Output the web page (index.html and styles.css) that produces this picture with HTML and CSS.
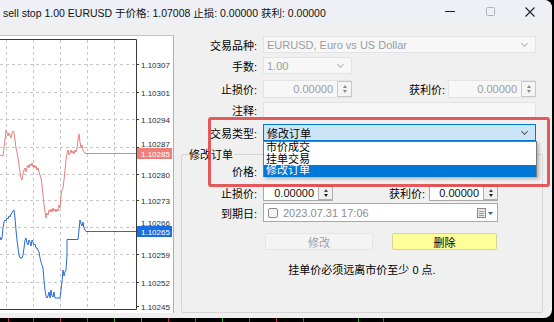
FILE: index.html
```html
<!DOCTYPE html>
<html lang="zh">
<head>
    <meta charset="UTF-8">
    <title>sell stop 1.00 EURUSD</title>
    <link rel="stylesheet" href="styles.css">
</head>
<body>
    <div class="window">
        <div class="titlebar">
            <span class="title">sell stop 1.00 EURUSD 于价格: 1.07008 止损: 0.00000 获利: 0.00000</span>
            <div class="controls">
                <svg class="ctl" width="40" height="24" viewBox="0 0 40 24"><line x1="15" y1="11.5" x2="25" y2="11.5" stroke="#222" stroke-width="1"/></svg>
                <svg class="ctl" width="40" height="24" viewBox="0 0 40 24"><rect x="16.5" y="7.5" width="8" height="8" rx="1" fill="none" stroke="#b4b4b4"/></svg>
                <svg class="ctl" width="40" height="24" viewBox="0 0 40 24"><path d="M15.5 7.5 L24.5 16.5 M24.5 7.5 L15.5 16.5" stroke="#222" stroke-width="1.1"/></svg>
            </div>
        </div>
        <div class="content">
            <div class="chart">
                <svg width="173" height="277" viewBox="0 36 173 277">
                    <!-- сетка -->
                    <g stroke="#c8c8c8" stroke-dasharray="3,3">
                        <line x1="6.5" y1="40" x2="6.5" y2="309"/>
                        <line x1="33.5" y1="40" x2="33.5" y2="309"/>
                        <line x1="60.5" y1="40" x2="60.5" y2="309"/>
                        <line x1="87.5" y1="40" x2="87.5" y2="309"/>
                        <line x1="114.5" y1="40" x2="114.5" y2="309"/>
                        <line x1="0" y1="64.5" x2="136" y2="64.5"/>
                        <line x1="0" y1="92.5" x2="136" y2="92.5"/>
                        <line x1="0" y1="119.5" x2="136" y2="119.5"/>
                        <line x1="0" y1="147.5" x2="136" y2="147.5"/>
                        <line x1="0" y1="174.5" x2="136" y2="174.5"/>
                        <line x1="0" y1="200.5" x2="136" y2="200.5"/>
                        <line x1="0" y1="227.5" x2="136" y2="227.5"/>
                        <line x1="0" y1="254.5" x2="136" y2="254.5"/>
                        <line x1="0" y1="282.5" x2="136" y2="282.5"/>
                    </g>
                    <polyline fill="none" stroke="#e8807c" stroke-width="1" points="0,155 3,156 4,148 5,140 6,130 7,133 8,136 9,133 10,135 11,138 12,133 13,131 14,133 15,140 16,148 17,152 18,158 19,165 20,172 21,178 22,180 23,174 24,170 25,168 26,172 27,167 28,165 29,168 30,164 31,166 32,163 33,167 34,165 35,168 36,166 37,170 38,168 39,172 40,175 41,178 42,185 43,195 44,205 45,212 46,218 47,213 48,215 49,210 50,212 51,209 52,212 53,208 54,211 55,209 56,212 57,209 58,211 59,205 60,208 61,195 62,190 63,188 64,180 65,170 66,160 67,154 68,150 69,155 70,153 71,150 72,153 73,151 74,154 75,150 76,152 77,148 78,140 79,134 80,142 81,148 82,145 83,150 84,152 85,153.5 136,153.5"/>
                    <polyline fill="none" stroke="#2a6ad8" stroke-width="1" points="0,237 1,240 2,238 3,228 4,222 5,220 6,221 7,218 8,219 9,216 10,217 11,214 12,213 13,211 14,210 15,218 16,230 17,240 18,248 19,255 20,258 22,258 23,255 24,248 25,240 26,238 27,243 28,245 29,240 30,242 31,246 32,240 33,242 34,245 35,244 36,248 37,248 38,250 39,252 40,258 41,262 42,265 43,268 44,280 45,290 46,296 47,298 48,296 49,292 50,298 51,290 52,296 53,297 54,292 55,298 60,298 61,290 62,282 63,270 64,276 65,272 66,270 67,255 67,239.5 78,239.5 79,230 80,220 81,224 82,226 83,222 84,228 85,230 86,231.5 136,231.5"/>
                    <!-- рамка -->
                    <path d="M0 39.5 H136.5 V309.5 H0" fill="none" stroke="#3a3a3a" stroke-width="1"/>
                    <g stroke="#3a3a3a">
                        <line x1="136" y1="64.5" x2="139" y2="64.5"/>
                        <line x1="136" y1="92.5" x2="139" y2="92.5"/>
                        <line x1="136" y1="119.5" x2="139" y2="119.5"/>
                        <line x1="136" y1="147.5" x2="139" y2="147.5"/>
                        <line x1="136" y1="174.5" x2="139" y2="174.5"/>
                        <line x1="136" y1="200.5" x2="139" y2="200.5"/>
                        <line x1="136" y1="227.5" x2="139" y2="227.5"/>
                        <line x1="136" y1="254.5" x2="139" y2="254.5"/>
                        <line x1="136" y1="282.5" x2="139" y2="282.5"/>
                        <line x1="136" y1="306.5" x2="139" y2="306.5"/>
                    </g>
                    <g class="axis">
                        <text x="141" y="67.5">1.10307</text>
                        <text x="141" y="95.5">1.10301</text>
                        <text x="141" y="122.5">1.10294</text>
                        <text x="141" y="147">1.10287</text>
                        <text x="141" y="177.5">1.10280</text>
                        <text x="141" y="203.5">1.10273</text>
                        <text x="141" y="226">1.10266</text>
                        <text x="141" y="257.5">1.10259</text>
                        <text x="141" y="285.5">1.10252</text>
                        <text x="141" y="309.5">1.10245</text>
                    </g>
                    <rect x="137" y="148" width="35" height="11" fill="#f07d7a"/>
                    <text class="axis-tag" x="141" y="156.5">1.10285</text>
                    <rect x="137" y="226" width="35" height="11" fill="#1a6fe0"/>
                    <text class="axis-tag" x="141" y="234.5">1.10265</text>
                </svg>
            </div>
            <div class="form">
                <div class="row r1">
                    <span class="lbl">交易品种:</span>
                    <div class="combo off w-full"><span>EURUSD, Euro vs US Dollar</span><i class="chev"></i></div>
                </div>
                <div class="row r2">
                    <span class="lbl">手数:</span>
                    <div class="combo off w-vol"><span>1.00</span><i class="chev"></i></div>
                </div>
                <div class="row r3">
                    <span class="lbl">止损价:</span>
                    <div class="spin off w-sl"><span class="num">0.00000</span><span class="arrows"><b class="up"></b><b class="dn"></b></span></div>
                    <span class="lbl2">获利价:</span>
                    <div class="spin off w-tp"><span class="num">0.00000</span><span class="arrows"><b class="up"></b><b class="dn"></b></span></div>
                </div>
                <div class="row r4">
                    <span class="lbl">注释:</span>
                    <div class="edit off w-full"></div>
                </div>
                <div class="row r5">
                    <span class="lbl">交易类型:</span>
                    <div class="combo focus w-full"><span>修改订单</span><i class="chev"></i></div>
                </div>

                <div class="group">
                    <span class="legend">修改订单</span>
                    <div class="grow g1">
                        <span class="glbl">价格:</span>
                    </div>
                    <div class="grow g2">
                        <span class="glbl">止损价:</span>
                        <div class="spin on w-gsl"><span class="num">0.00000</span><span class="arrows"><b class="up"></b><b class="dn"></b></span></div>
                        <span class="glbl2">获利价:</span>
                        <div class="spin on w-gtp"><span class="num">0.00000</span><span class="arrows"><b class="up"></b><b class="dn"></b></span></div>
                    </div>
                    <div class="grow g3">
                        <span class="glbl">到期日:</span>
                        <div class="date">
                            <i class="check"></i>
                            <span class="date-text">2023.07.31 17:06</span>
                            <svg class="cal" width="18" height="12" viewBox="0 0 18 12">
                                <rect x="0.5" y="1.5" width="8" height="9" fill="#e8e8e8" stroke="#8a8a8a"/>
                                <line x1="2" y1="4.5" x2="7" y2="4.5" stroke="#9a9a9a"/>
                                <line x1="2" y1="6.5" x2="7" y2="6.5" stroke="#9a9a9a"/>
                                <line x1="2" y1="8.5" x2="7" y2="8.5" stroke="#9a9a9a"/>
                                <path d="M11 5 H16 L13.5 8 Z" fill="#3a5f9c"/>
                            </svg>
                        </div>
                    </div>
                    <div class="grow g4">
                        <button class="btn btn-off">修改</button>
                        <button class="btn btn-del">删除</button>
                    </div>
                    <p class="note">挂单价必须远离市价至少 0 点.</p>
                </div>
            </div>
        </div>

        <ul class="dropdown">
            <li>市价成交</li>
            <li>挂单交易</li>
            <li class="sel">修改订单</li>
        </ul>
        <div class="highlight"></div>
    </div>
    <div class="ticks">
        <i style="left:8px" class="tr"></i><i style="left:33px" class="tr"></i><i style="left:60px" class="tr"></i>
        <i style="left:87px" class="tr"></i><i style="left:114px" class="tg"></i><i style="left:141px" class="tg"></i>
        <i style="left:168px" class="tr"></i><i style="left:195px" class="tr"></i><i style="left:222px" class="tg"></i>
        <i style="left:249px" class="tr"></i><i style="left:276px" class="tr"></i><i style="left:303px" class="tr"></i>
        <i style="left:358px" class="tg"></i><i style="left:383px" class="tr"></i>
    </div>
</body>
</html>
```

FILE: styles.css
```css
* {
    box-sizing: border-box;
}
body {
    margin: 0;
    width: 554px;
    height: 322px;
    overflow: hidden;
    background-color: #000;
    font-family: "Liberation Sans", "Noto Sans CJK SC", sans-serif;
    font-size: 11px;
    color: #000;
}
.window {
    position: relative;
    width: 552px;
    height: 318px;
    background-color: #f0f0f0;
    border-radius: 0 8px 8px 0;
    overflow: hidden;
    display: flex;
    flex-direction: column;
}
.titlebar {
    height: 24px;
    background-color: #eef0f5;
    display: flex;
    align-items: center;
}
.title {
    flex: 1;
    padding-left: 3px;
    font-size: 10.5px;
    white-space: nowrap;
    color: #111;
}
.controls {
    display: flex;
    margin-right: 2px;
}
.content {
    flex: 1;
    display: flex;
}

/* gráfico de ticks */
.chart {
    width: 174px;
    height: 278px;
    margin-top: 11px;
    background-color: #fff;
    border-top: 1px solid #c4c4c4;
    border-right: 1px solid #b0b0b0;
}
.chart svg {
    display: block;
}
.axis text,
.axis-tag {
    font-family: "Liberation Sans", sans-serif;
    font-size: 8px;
    fill: #2b2b2b;
}
.axis-tag {
    fill: #fff;
}

/* formulario */
.form {
    flex: 1;
    padding-top: 12px;
}
.row {
    display: flex;
    align-items: center;
}
.lbl {
    width: 83px;
    margin-right: 6px;
    text-align: right;
    white-space: nowrap;
}
.lbl2 {
    width: 93px;
    margin-right: 3px;
    text-align: right;
}
.r1 { height: 17px; }
.r2 { height: 17px; margin-top: 4px; }
.r3 { height: 18px; margin-top: 6px; }
.r4 { height: 16px; margin-top: 4px; }
.r5 { height: 17px; margin-top: 6px; }

.combo,
.edit,
.spin {
    height: 100%;
    display: flex;
    align-items: center;
    border: 1px solid #e3e3e3;
    background-color: #f7f7f7;
    color: #9c9ca4;
    white-space: nowrap;
}
.combo span {
    flex: 1;
    padding-left: 3px;
}
.w-full { width: 273px; }
.w-vol { width: 89px; }
.w-sl { width: 89px; }
.w-tp { width: 88px; }
.chev {
    width: 5px;
    height: 5px;
    margin: 0 8px 3px 0;
    border-right: 1px solid #b5b5b5;
    border-bottom: 1px solid #b5b5b5;
    transform: rotate(45deg);
}
.combo.focus {
    background-color: #cce4f7;
    border-color: #0078d7;
    color: #000;
}
.combo.focus .chev {
    border-color: #555;
}
.spin .num {
    flex: 1;
    text-align: right;
    padding-right: 4px;
}
.arrows {
    width: 15px;
    height: 100%;
    margin-right: -1px;
    border: 1px solid #c9c9c9;
    display: flex;
    flex-direction: column;
    align-items: center;
    justify-content: space-evenly;
    background-color: #f4f4f4;
}
.arrows b {
    width: 0;
    height: 0;
    border-left: 2.5px solid transparent;
    border-right: 2.5px solid transparent;
}
.arrows .up { border-bottom: 3px solid #8a8a8a; }
.arrows .dn { border-top: 3px solid #8a8a8a; }

/* grupo modificar */
.group {
    position: relative;
    width: 362px;
    height: 159px;
    margin: 13px 0 0 7px;
    border: 1px solid #d6d6d6;
    border-radius: 2px;
    padding-top: 8px;
}
.legend {
    position: absolute;
    top: -9px;
    left: 6px;
    padding: 0 1px;
    background-color: #f0f0f0;
}
.grow {
    display: flex;
    align-items: center;
}
.glbl {
    width: 75px;
    margin-right: 6px;
    text-align: right;
}
.glbl2 {
    width: 92px;
    margin-right: 4px;
    text-align: right;
}
.g1 { height: 16px; }
.g2 { height: 16px; margin-top: 6px; }
.g3 { height: 19px; margin-top: 2px; }
.g4 { height: 17px; margin-top: 11px; padding-left: 83px; gap: 19px; }
.spin.on {
    background-color: #fff;
    border-color: #a8a8a8;
    color: #111;
}
.spin.on .arrows {
    border-color: #b0b0b0;
    background-color: #f0f0f0;
}
.spin.on .arrows .up { border-bottom-color: #444; }
.spin.on .arrows .dn { border-top-color: #222; }
.w-gsl { width: 70px; }
.w-gtp { width: 69px; }
.date {
    width: 235px;
    height: 100%;
    display: flex;
    align-items: center;
    background-color: #fff;
    border: 1px solid #a8a8a8;
    padding-left: 4px;
}
.check {
    width: 10px;
    height: 10px;
    border: 1px solid #8c8c8c;
    border-radius: 2px;
    background-color: #f4f4f4;
}
.date-text {
    flex: 1;
    margin-left: 5px;
    color: #8c8c94;
}
.cal {
    margin-right: 2px;
}
.btn {
    height: 100%;
    padding: 0;
    font: inherit;
    border-radius: 2px;
}
.btn-off {
    width: 108px;
    background-color: #f4f4f4;
    border: 1px solid #e4e4e4;
    color: #a0a0a0;
}
.btn-del {
    width: 105px;
    background-color: #ffff99;
    border: 1px solid #d4d49a;
    color: #000;
}
.note {
    margin: 13px 0 0;
    text-align: center;
    line-height: 14px;
}

/* lista desplegable y marca roja */
.dropdown {
    position: absolute;
    left: 263px;
    top: 141px;
    width: 274px;
    height: 36px;
    margin: 0;
    padding: 0;
    list-style: none;
    background-color: #fff;
    border: 1px solid #7a7a7a;
    box-shadow: 2px 2px 3px rgba(0, 0, 0, 0.25);
}
.dropdown li {
    height: 11.5px;
    line-height: 11px;
    padding-left: 2px;
}
.dropdown li.sel {
    height: 12px;
    background-color: #0078d7;
    color: #fff;
}
.highlight {
    position: absolute;
    left: 208px;
    top: 117px;
    width: 342px;
    height: 70px;
    border: 3px solid rgba(226, 62, 66, 0.85);
    border-radius: 3px;
}
.ticks {
    position: relative;
    height: 4px;
}
.ticks i {
    position: absolute;
    top: 0;
    width: 1px;
    height: 4px;
}
.ticks .tr { background-color: #b33; }
.ticks .tg { background-color: #3a3; }
```
